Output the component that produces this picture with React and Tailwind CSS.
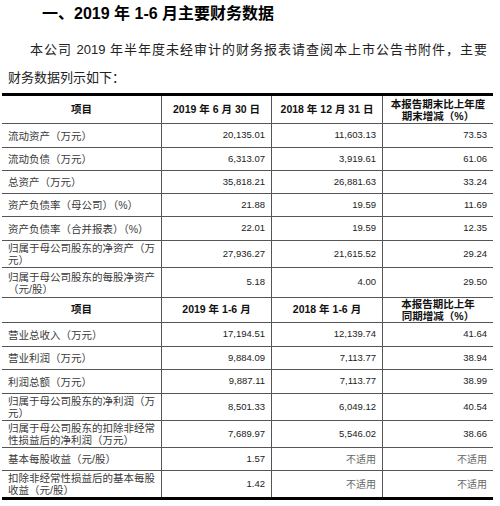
import React from "react";

const FONT = { fontFamily: '"Liberation Sans", "Noto Sans CJK SC", sans-serif' };

const rows = [
  { kind: "head", h: "h-[28px]", cells: ["项目", "2019 年 6 月 30 日", "2018 年 12 月 31 日", ["本报告期末比上年度", "期末增减（%）"]] },
  { h: "h-[24px]", label: ["流动资产（万元）"], v: ["20,135.01", "11,603.13", "73.53"] },
  { h: "h-[23px]", label: ["流动负债（万元）"], v: ["6,313.07", "3,919.61", "61.06"] },
  { h: "h-[23px]", label: ["总资产（万元）"], v: ["35,818.21", "26,881.63", "33.24"] },
  { h: "h-[23px]", label: ["资产负债率（母公司）（%）"], v: ["21.88", "19.59", "11.69"] },
  { h: "h-[24px]", label: ["资产负债率（合并报表）（%）"], v: ["22.01", "19.59", "12.35"] },
  { h: "h-[27px]", label: ["归属于母公司股东的净资产（万", "元）"], v: ["27,936.27", "21,615.52", "29.24"] },
  { h: "h-[30px]", label: ["归属于母公司股东的每股净资产", "（元/股）"], v: ["5.18", "4.00", "29.50"] },
  { kind: "head", h: "h-[25px]", cells: ["项目", "2019 年 1-6 月", "2018 年 1-6 月", ["本报告期比上年", "同期增减（%）"]] },
  { h: "h-[24px]", label: ["营业总收入（万元）"], v: ["17,194.51", "12,139.74", "41.64"] },
  { h: "h-[23px]", label: ["营业利润（万元）"], v: ["9,884.09", "7,113.77", "38.94"] },
  { h: "h-[24px]", label: ["利润总额（万元）"], v: ["9,887.11", "7,113.77", "38.99"] },
  { h: "h-[27px]", label: ["归属于母公司股东的净利润（万", "元）"], v: ["8,501.33", "6,049.12", "40.54"] },
  { h: "h-[27px]", label: ["归属于母公司股东的扣除非经常", "性损益后的净利润（万元）"], v: ["7,689.97", "5,546.02", "38.66"] },
  { h: "h-[23px]", label: ["基本每股收益（元/股）"], v: ["1.57", "不适用", "不适用"] },
  { h: "h-[29px]", last: true, label: ["扣除非经常性损益后的基本每股", "收益（元/股）"], v: ["1.42", "不适用", "不适用"] },
];

const colW = ["w-[160px]", "w-[110px]", "w-[111px]", "w-[110px]"];

function Lines({ lines }) {
  return (
    <div className="leading-[12px]">
      {lines.map((l, i) => (
        <div key={i}>{l}</div>
      ))}
    </div>
  );
}

function Row({ row }) {
  const base = `flex ${row.h} ${row.last ? "border-b-[3px] border-black" : "border-b border-[#555]"}`;
  if (row.kind === "head") {
    return (
      <div className={base}>
        {row.cells.map((c, i) => (
          <div
            key={i}
            className={`${colW[i]} flex items-center justify-center text-center font-bold text-[10.5px] text-[#111] ${i < 3 ? "border-r border-[#555]" : ""}`}
          >
            {Array.isArray(c) ? <Lines lines={c} /> : <span>{c}</span>}
          </div>
        ))}
      </div>
    );
  }
  return (
    <div className={base}>
      <div className={`${colW[0]} flex items-center pl-[6px] text-[10.5px] text-[#3a3a3a] border-r border-[#555]`}>
        <Lines lines={row.label} />
      </div>
      {row.v.map((v, i) => {
        const na = v === "不适用";
        return (
          <div
            key={i}
            className={`${colW[i + 1]} flex items-center justify-end pr-[6px] ${i < 2 ? "border-r border-[#555]" : ""} ${na ? "text-[10px] text-[#666]" : "text-[9.5px] text-[#222]"}`}
          >
            {v}
          </div>
        );
      })}
    </div>
  );
}

export default function App() {
  return (
    <div className="w-[500px] h-[506px] bg-white overflow-hidden" style={FONT}>
      <div className="h-[28px] leading-[28px] pl-[42px] text-[16px] font-bold text-black">
        一、2019 年 1-6 月主要财务数据
      </div>
      <div className="mt-[8px] pl-[8px] pr-[13px] text-[13px] leading-[28px] text-[#222]">
        <div className="pl-[22px] whitespace-nowrap text-justify [text-align-last:justify]">
          本公司 2019 年半年度未经审计的财务报表请查阅本上市公告书附件，主要
        </div>
        <div>财务数据列示如下：</div>
      </div>
      <div className="mt-[1px] ml-[2px] w-[491px] border-t-[3px] border-black">
        {rows.map((r, i) => (
          <Row key={i} row={r} />
        ))}
      </div>
    </div>
  );
}
